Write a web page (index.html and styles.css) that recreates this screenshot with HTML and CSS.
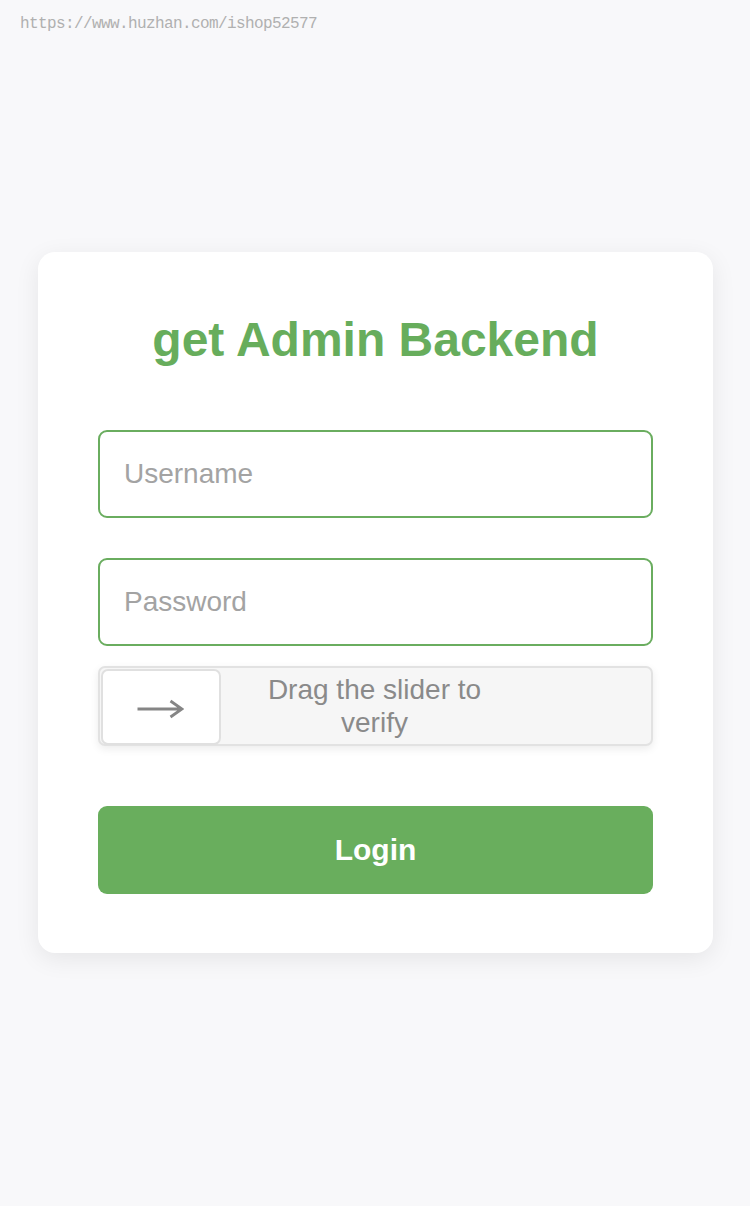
FILE: index.html
```html
<!DOCTYPE html>
<html>
<head>
<meta charset="utf-8">
<link rel="stylesheet" href="styles.css">
</head>
<body>
<div class="watermark">https://www.huzhan.com/ishop52577</div>
<main class="page">
  <section class="card">
    <h1 class="title">get Admin Backend</h1>
    <form class="form">
      <input class="field" type="text" placeholder="Username">
      <input class="field" type="password" placeholder="Password">
      <div class="slider">
        <div class="handle">
          <svg class="arrow" width="48" height="20" viewBox="0 0 48 20">
            <path d="M1.5 10 H45 M34.5 2 L46 10 L34.5 18" fill="none" stroke="#858585" stroke-width="2.8" stroke-linecap="butt" stroke-linejoin="miter"/>
          </svg>
        </div>
        <div class="slider-text">Drag the slider to<br>verify</div>
      </div>
      <button type="button" class="login">Login</button>
    </form>
  </section>
</main>
</body>
</html>
```
FILE: styles.css
```css
* { box-sizing: border-box; }
html, body { margin: 0; padding: 0; }
body {
  width: 750px;
  height: 1206px;
  background: #f8f8fa;
  font-family: "Liberation Sans", Arial, sans-serif;
  position: relative;
}
.watermark {
  position: absolute;
  left: 20px;
  top: 15px;
  font-family: "Liberation Mono", "DejaVu Sans Mono", monospace;
  font-size: 16px;
  color: #b0b0b0;
  letter-spacing: -0.6px;
}
.page {
  padding: 252px 37px 0 38px;
}
.card {
  background: #fff;
  border-radius: 17px;
  box-shadow: 0 6px 24px rgba(0, 0, 0, 0.08);
  padding: 57px 60px 59px;
  height: 701px;
}
.title {
  margin: 0;
  text-align: center;
  color: #67ad5c;
  font-size: 48px;
  font-weight: bold;
  line-height: 62px;
}
.form {
  display: flex;
  flex-direction: column;
  margin-top: 59px;
}
.field {
  height: 88px;
  border: 2px solid #6aad5f;
  border-radius: 9px;
  padding: 0 24px;
  font-family: "Liberation Sans", Arial, sans-serif;
  font-size: 28px;
  color: #333;
  background: #fff;
  outline: none;
  margin-bottom: 40px;
}
.field + .field { margin-bottom: 20px; }
.field::placeholder { color: #a3a3a3; }
.slider {
  height: 80px;
  background: #f6f6f6;
  border: 2px solid #e2e2e2;
  border-radius: 7px;
  box-shadow: 0 3px 8px rgba(0, 0, 0, 0.08);
  position: relative;
  display: flex;
  align-items: center;
  justify-content: center;
}
.handle {
  position: absolute;
  left: 1px;
  top: 1px;
  width: 120px;
  height: 76px;
  background: #fff;
  border: 2px solid #e0e0e0;
  border-radius: 7px;
  display: flex;
  align-items: center;
  justify-content: center;
}
.arrow { display: block; margin-left: -3px; margin-top: 4px; }
.slider-text {
  text-align: center;
  color: #8a8a8a;
  font-size: 28px;
  line-height: 33px;
  margin-left: -2px;
}
.login {
  margin-top: 60px;
  height: 88px;
  border: none;
  border-radius: 9px;
  background: #69ae5d;
  color: #fff;
  font-family: "Liberation Sans", Arial, sans-serif;
  font-size: 30px;
  font-weight: bold;
}
```
